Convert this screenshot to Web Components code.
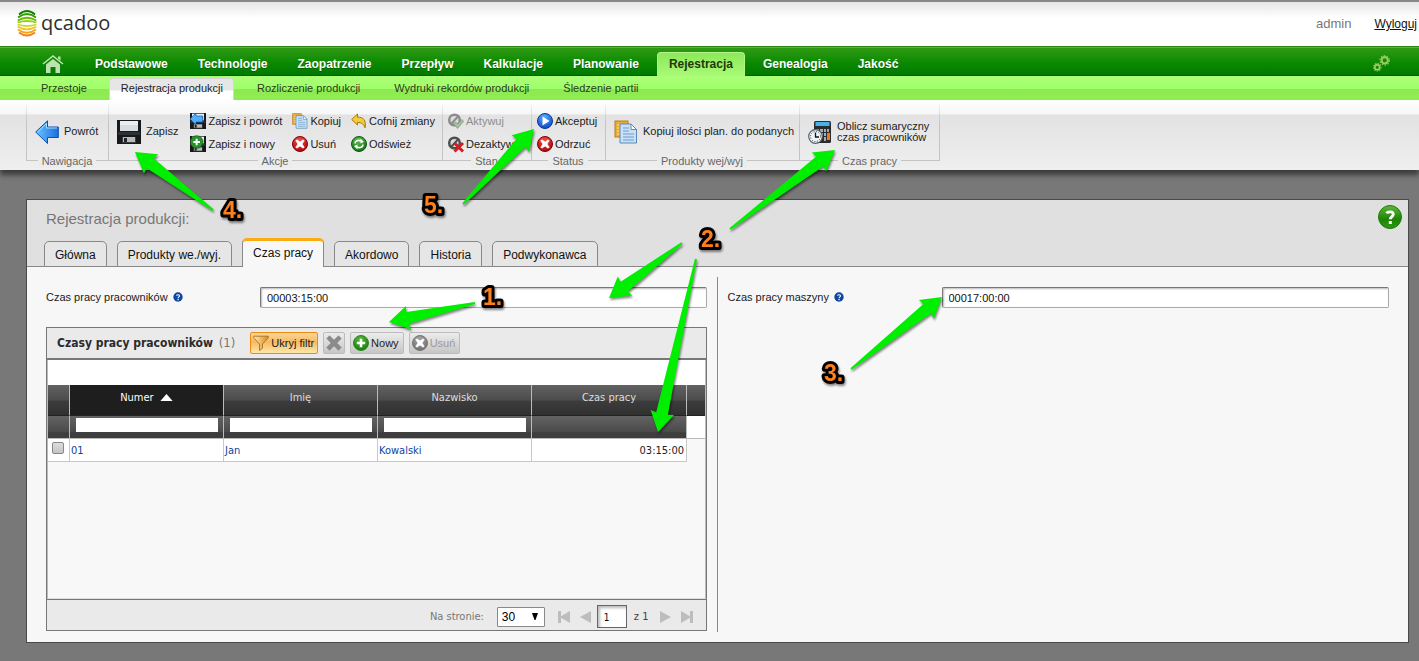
<!DOCTYPE html>
<html lang="pl">
<head>
<meta charset="utf-8">
<title>qcadoo - Rejestracja produkcji</title>
<style>
  html { min-height: 100%; background: #787878; }
  body { margin: 0; font: 11px/14px "Liberation Sans", Arial, sans-serif; color: #222; }
</style>
</head>
<body>
<qc-app></qc-app>

<script>
/* ---------- icons ---------- */
const FLOPPY = `
  <rect x="0" y="0" width="24" height="24" fill="#16181c"/>
  <rect x="3" y="1" width="18" height="10" fill="#e9edef"/>
  <path d="M3 6h18M3 8h18M3 10h18" stroke="#c3ccd2" stroke-width="1"/>
  <rect x="1" y="12" width="22" height="3" fill="#2c2f36"/>
  <rect x="5" y="17" width="14" height="6" fill="#3a3d40"/>
  <rect x="6" y="17" width="12" height="5" fill="#b9b9b9"/>
  <rect x="7" y="18" width="3" height="4" fill="#222"/>`;
const ball = (a, b, rim) => `
  <radialGradient id="g" cx=".45" cy=".25" r=".8"><stop offset="0" stop-color="${a}"/><stop offset="1" stop-color="${b}"/></radialGradient>
  <circle cx="8" cy="8" r="7.5" fill="url(#g)" stroke="${rim}"/>`;
const CROSS = c => `<path d="M4.8 3.8 8 6l3.2-2.2 1 1L10 8l2.2 3.2-1 1L8 10l-3.200 2.200-1-1L6 8 3.800 4.800z" fill="${c}" stroke="${c}" stroke-width=".7"/>`;
const COPY = `
  <rect x="1" y="1" width="13" height="16" fill="#e8ab35" stroke="#b97f1b"/>
  <path d="M3 5h3M3 8h3M3 11h3M3 14h3" stroke="#fbe3a5"/>
  <path d="M6 4h11l5.500 5.500V23H6z" fill="#c9e1f7" stroke="#5d88b5"/>
  <path d="M17 4v5.500h5.500z" fill="#fff" stroke="#5d88b5"/>
  <path d="M9 8h6M9 11h6M9 14h11M9 17h11M9 20h11" stroke="#6f9dca"/>`;
const ICONS = {
  home: ["0 0 22 18", `<path d="M1 9 11 1l10 8" fill="none" stroke="#bfe3b0" stroke-width="1.600"/><path d="M16 1.500h2.500v4L16 3.500zM4 9.500 11 4l7 5.500V18h-4.500v-6h-5v6H4z" fill="#bfe3b0"/>`],
  gears: ["0 0 16 16", `<g fill="none" stroke="#9aca62"><circle cx="11" cy="5" r="3" stroke-width="2"/><circle cx="11" cy="5" r="4.500" stroke-width="1" stroke-dasharray="1.400 1.400"/><circle cx="4" cy="11.500" r="2.300" stroke-width="1.700"/><circle cx="4" cy="11.500" r="3.600" stroke-width="1" stroke-dasharray="1.200 1.200"/></g>`],
  back: ["0 0 24 24", `<linearGradient id="g" x2="1"><stop offset="0" stop-color="#6cc4ff"/><stop offset="1" stop-color="#1a6fe0"/></linearGradient><path d="M.7 12 12.500 .800V7h10.800v10.500H12.500v6z" fill="url(#g)" stroke="#0b4fb5"/><path d="M2.500 12 11.500 3.500V8h10.500" fill="none" stroke="#a9deff"/>`],
  save: ["0 0 24 24", FLOPPY],
  saveBack: ["0 0 24 24", FLOPPY + `<path d="M0 9 9 0v4.500h10v9H9V18z" fill="#4db0f8" stroke="#0b4fb5"/>`],
  saveNew: ["0 0 24 24", FLOPPY + `<circle cx="10" cy="9" r="9.500" fill="#27922a" stroke="#0f5c13"/><path d="M10 4v10M5 9h10" stroke="#fff" stroke-width="3"/>`],
  copy: ["0 0 24 24", COPY],
  remove: ["0 0 16 16", ball("#f0504a", "#a80008", "#860006") + CROSS("#fff")],
  undo: ["0 0 16 16", `<path d="M.7 6.500 6.500 1v3.200C12 4 15.500 7 14 14.800 12.800 11 10.500 9.300 6.500 9.300V12z" fill="#f3cd3c" stroke="#a87608"/>`],
  refresh: ["0 0 16 16", ball("#5fc04e", "#0e6c12", "#0b5a0e") + `<g fill="none" stroke="#fff" stroke-width="1.600"><path d="M4 7.500C4 5 7 3.500 10 5M12 8.500c0 2.500-3 4-6 2.500"/></g><path d="M9.500 2.500v5L13 6zM6.500 13.500v-5L3 10z" fill="#fff"/>`],
  activate: ["0 0 16 16", `<circle cx="6.500" cy="7" r="5.300" fill="#ddd" stroke="#8c8c8c" stroke-width="2.500"/><path d="M3 11 10 3.500" stroke="#8c8c8c" stroke-width="2"/><path d="m5.500 10.500 2-1.500 2 2 4.500-4.500 1.500 2-6 7z" fill="#a6bfa0" stroke="#7e9a79" stroke-width=".7"/>`],
  deactivate: ["0 0 16 16", `<circle cx="6.500" cy="7" r="5.300" fill="#ddd" stroke="#4e4e4e" stroke-width="2.500"/><path d="M3 11 10 3.500" stroke="#4e4e4e" stroke-width="2"/><path d="m6.500 7 8.500 8.500M15 7 6.500 15.500" stroke="#cf1f22" stroke-width="3"/>`],
  accept: ["0 0 16 16", ball("#58b0ff", "#0a3fc4", "#0a369c") + `<path d="M5.500 3.500 12.500 8l-7 4.500z" fill="#fff"/>`],
  calc: ["0 0 24 24", `<rect x="6" y="1" width="17" height="22" rx="1.500" fill="#2a2c30"/><rect x="7.500" y="2" width="14" height="4" fill="#46b3ea"/><g fill="#a9adb0"><path d="M8 9h3v3H8zM12 9h3v3h-3zM16 9h2v3h-2zM12 13h3v3h-3zM16 13h2v3h-2zM16 17h2v4h-2zM19 9h2v3h-2z"/></g><path d="M19 13h3v7h-3z" fill="#ef7a1e"/><circle cx="7.500" cy="16.500" r="6.800" fill="#eef4f8" stroke="#56616b" stroke-width="1.200"/><circle cx="7.500" cy="16.500" r="5" fill="none" stroke="#333" stroke-dasharray="1 1.620"/><path d="M7.500 12.500v4.500H11" fill="none" stroke="#111" stroke-width="1.300"/>`],
  help: ["0 0 24 24", `<linearGradient id="g" x2="0" y2="1"><stop offset="0" stop-color="#5fb83a"/><stop offset=".6" stop-color="#1d8405"/><stop offset="1" stop-color="#2f9a12"/></linearGradient><circle cx="12" cy="12" r="11.500" fill="url(#g)" stroke="#1f7d0c"/><path d="M8.500 8.300C9.500 6.500 15.300 5.800 15.300 9.300c0 2.200-3 2.400-3 5" fill="none" stroke="#fff" stroke-width="2.800"/><rect x="10.800" y="16" width="3" height="3" fill="#fff"/>`],
  hint: ["0 0 10 10", `<circle cx="5" cy="5" r="4.700" fill="#0d479f"/><path d="M3.500 3.600C4 2.300 6.600 2.400 6.500 4 6.400 5 5.100 4.900 5.100 6.200" fill="none" stroke="#fff" stroke-width="1.100"/><rect x="4.500" y="7" width="1.200" height="1.200" fill="#fff"/>`],
  filter: ["0 0 16 16", `<linearGradient id="g" x2="1"><stop offset="0" stop-color="#ffe9b0"/><stop offset="1" stop-color="#d98b22"/></linearGradient><path d="M.7 1.200h14.600v1.500L9.500 9v4.200l-3 2.300V9L.7 2.700z" fill="url(#g)" stroke="#a8701c" stroke-width=".9"/>`],
  clear: ["0 0 16 16", `<path d="M3.500.8 8 5.200 12.500.8l2.700 2.700L10.800 8l4.400 4.500-2.700 2.700L8 10.800l-4.500 4.400L.8 12.500 5.200 8 .8 3.500z" fill="#8b8b8b" stroke="#777" stroke-width=".6"/>`],
  add: ["0 0 16 16", ball("#56b53c", "#137c05", "#2a8a16") + `<path d="M8 3.800v8.400M3.800 8h8.400" stroke="#fff" stroke-width="2.600"/>`],
  removeOff: ["0 0 16 16", ball("#a5a5a5", "#6c6c6c", "#777") + CROSS("#fff")],
  first: ["0 0 13 12", `<path d="M0 0h3v5.200L12 0v12L3 6.800V12H0z" fill="#bdbdbd"/>`],
  prev: ["0 0 13 12", `<path d="M12 0v12L1 6z" fill="#bdbdbd"/>`],
  next: ["0 0 13 12", `<path d="M1 0v12l11-6z" fill="#bdbdbd"/>`],
  last: ["0 0 13 12", `<path d="M13 0h-3v5.200L1 0v12l9-5.200V12h3z" fill="#bdbdbd"/>`],
  sort: ["0 0 14 8", `<path d="M7 0l7 8H0z" fill="#fff"/>`],
  caret: ["0 0 6 8", `<path d="M0 0h6L3.500 7h-1z" fill="#000"/>`],
  logo: ["0 0 20 28", `<g fill="none" stroke-width="1.800"><path d="M2 5.500Q10-1.500 18 5.500" stroke="#0c8000"/><path d="M1 8.500Q10 1.500 19 8.500" stroke="#359a00"/><path d="M.7 11.500Q10 6 19.300 11.500" stroke="#6cba05"/><path d="M.5 13.500Q10 10.500 19.500 13.500" stroke="#9ace18"/><path d="M.5 15.500Q10 18.500 19.500 15.500" stroke="#cfd92a"/><path d="M.7 17.800Q10 23 19.300 17.800" stroke="#eec422"/><path d="M1 20.500Q10 27 19 20.500" stroke="#f8a51c"/><path d="M2 23.500Q10 29.500 18 23.500" stroke="#f57f14"/></g>`]
};

/* registers an element; setup fills the cloned markup before it is attached */
const define = (name, html, setup) => {
  const template = document.createElement("template");
  template.innerHTML = html;
  customElements.define(name, class extends HTMLElement {
    connectedCallback() {
      if (this.shadowRoot) return;
      const content = template.content.cloneNode(true);
      if (setup) setup(this, content);
      this.attachShadow({ mode: "open" }).append(content);
    }
  });
};

/* <qc-icon name w h> */
define("qc-icon", `<style>:host{display:block;flex:none} svg{display:block;overflow:visible}</style><svg aria-hidden="true"></svg>`, (el, root) => {
  const [box, body] = ICONS[el.getAttribute("name")];
  const svg = root.querySelector("svg");
  svg.setAttribute("viewBox", box);
  svg.setAttribute("width", el.getAttribute("w") || 16);
  svg.setAttribute("height", el.getAttribute("h") || el.getAttribute("w") || 16);
  svg.innerHTML = body;
});

/* top strip with logo and session links */
define("qc-header", `
<style>
  :host { display: flex; box-sizing: border-box; height: 46px; border-top: 2px solid #888; padding: 0 2px 0 17px; align-items: center; background: linear-gradient(#e6e6e6, #fff 16px); }
  .brand { display: flex; align-items: center; gap: 4px; height: 44px; padding-bottom: 3px; box-sizing: border-box; font: 20px/24px "Open Sans", "Noto Sans", sans-serif; color: #2e2e2e; }
  nav { margin-left: auto; display: flex; gap: 23px; font-size: 12px; color: #777; }
  .user { font-size: 13px; }
  a { color: #111; text-decoration: underline; }
</style>
<div class="brand"><qc-icon name="logo" w="20" h="28"></qc-icon><span>qcadoo</span></div>
<nav><span class="user">admin</span><a href="#logout">Wyloguj</a></nav>`);

/* main menu */
define("qc-menu", `
<style>
  :host { display: flex; box-sizing: border-box; height: 30px; padding: 0 29px 0 42px; border-top: 1px solid #2c8a12; border-bottom: 1px solid #085a04; background: linear-gradient(#5cb03c 1px, #2f9a14 1px, #0a8800 60%, #007a00); font: bold 12px/16px "Liberation Sans", Arial, sans-serif; align-items: center; }
  nav { display: flex; align-self: stretch; align-items: flex-end; gap: 6px; margin-left: 19px; }
  ::slotted(a) { padding: 4px 12px 3px; color: #fff; text-decoration: none; text-shadow: 0 1px 0 #05600a; }
  ::slotted(a[aria-current]) { padding: 3px 11px 4px; margin-bottom: -1px; color: #1d3a08; text-shadow: none; border: 1px solid #b6f58c; border-bottom: 0; border-radius: 4px 4px 0 0; background: linear-gradient(#8ce85a, #a9fa76); }
  .gear { margin-left: auto; padding-top: 4px; }
  .homelink { margin-top: 6px; }
</style>
<a class="homelink" href="#home" aria-label="Start"><qc-icon name="home" w="22" h="18"></qc-icon></a>
<nav><slot></slot></nav>
<a class="gear" href="#admin" aria-label="Administracja"><qc-icon name="gears" w="17"></qc-icon></a>`);

define("qc-submenu", `
<style>
  :host { display: flex; box-sizing: border-box; height: 24px; padding: 0 29px; gap: 11px; align-items: flex-end; background: linear-gradient(#acff78, #9fff68 13px, #8ee852 13px, #90ee52); line-height: 16px; }
  ::slotted(a) { padding: 0 11px 4px 12px; color: #2b3b1b; text-decoration: none; }
  ::slotted(a[aria-current]) { padding: 1px 10px 4px 11px; border-radius: 4px 4px 0 0; border: 1px solid #d6d6d6; border-bottom: 0; color: #222; background: linear-gradient(#e6e6e6 50%, #fff 60%); }
</style><slot></slot>`);

/* ribbon */
define("qc-ribbon", `
<style>
  :host { display: flex; box-sizing: border-box; height: 70px; padding: 2px 26px 0; background: linear-gradient(#fff, #f6f6f6 14px, #e2e2e2 15px, #efefef); box-shadow: 0 5px 5px #3c3c3c; }
</style><slot></slot>`);

define("qc-ribbon-group", `
<style>
  :host { display: flex; flex-direction: column; box-sizing: border-box; flex: none; height: 66px; }
  .items { display: flex; align-items: center; box-sizing: border-box; height: 59px; padding: 1px 0 0 5px; border: 1px solid; border-image: linear-gradient(#c4c4c400, #c4c4c4 40%) 1; border-top: 0; border-right: 0; }
  :host([wide]) .items { padding-left: 8px; }
  :host([last]) .items { border-right: 1px solid; }
  .name { align-self: center; margin-top: -7px; padding: 0 4px; background: #ececec; color: #666; }
</style>
<div class="items"><slot></slot></div><div class="name"></div>`, (el, root) => {
  root.querySelector(".name").textContent = el.getAttribute("name");
  el.style.width = el.getAttribute("width") + "px";
});

define("qc-ribbon-stack", `
<style>:host { display: grid; grid-auto-flow: column; grid-template-rows: 16px 16px; row-gap: 7px; column-gap: 10px; padding-top: 2px; justify-items: start; flex: none; }</style><slot></slot>`);

/* ribbon and grid buttons hand their icon name to the inner qc-icon */
const setupButton = (el, root) => {
  const icon = root.querySelector("qc-icon");
  icon.setAttribute("name", el.getAttribute("icon"));
  icon.setAttribute("w", el.hasAttribute("big") ? 24 : 16);
  const button = root.querySelector("button");
  button.disabled = el.hasAttribute("off");
  if (el.hasAttribute("label")) button.setAttribute("aria-label", el.getAttribute("label"));
};

define("qc-action", `
<style>
  :host { display: block; flex: none; }
  button { display: flex; align-items: center; gap: 2px; padding: 0; border: 0; background: none; font: inherit; line-height: 14px; color: #1c1c1c; white-space: nowrap; text-align: left; }
  :host([big]) button { gap: 5px; line-height: 11px; }
  button:disabled { color: #8d8d8d; }
</style>
<button type="button"><qc-icon></qc-icon><span><slot></slot></span></button>`, setupButton);

/* labelled text field */
define("qc-field", `
<style>
  :host { display: flex; align-items: center; }
  label { display: flex; align-items: center; gap: 5px; flex: 0 0 214px; height: 16px; padding-bottom: 2px; color: #1a1a1a; }
  input { flex: 1; min-width: 0; box-sizing: border-box; height: 21px; padding: 1px 6px 0; border: 1px solid #aaa; border-top: 1px solid #777; border-left-color: #777; border-radius: 2px; box-shadow: inset 1px 1px 2px #bbb; background: #fff; font: inherit; color: #111; }
</style>
<label for="f"><span></span><qc-icon name="hint" w="10"></qc-icon></label><input id="f" type="text">`, (el, root) => {
  root.querySelector("span").textContent = el.getAttribute("label");
  root.querySelector("input").setAttribute("value", el.getAttribute("value"));
});

define("qc-tabs", `
<style>
  :host { display: flex; align-items: flex-end; gap: 10px; margin-bottom: -1px; }
  ::slotted(button) { box-sizing: border-box; height: 26px; padding: 1px 10px 0; border: 1px solid #888; border-radius: 5px 5px 0 0; background: #e6e6e6; color: #111; font: 12px/16px "Liberation Sans", Arial, sans-serif; }
  ::slotted(button[aria-selected="true"]) { height: 29px; padding: 0 10px 3px; border-top: 3px solid #fdab13; border-bottom: 0; background: #f7f7f7; }
</style><slot></slot>`);

/* toolbar button in grid header */
define("qc-tool", `
<style>
  :host { display: block; flex: none; }
  button { display: flex; align-items: center; gap: 2px; box-sizing: border-box; height: 22px; padding: 0 4px 0 2px; border: 1px solid #bcbcbc; border-radius: 2px; background: linear-gradient(#ececec, #c6c6c6); font: inherit; color: #222; white-space: nowrap; }
  :host([square]) button { gap: 0; padding: 0 2px; }
  :host([active]) button { padding: 0 3px 0 2px; border: 1px solid #f08a12; background: linear-gradient(#fad79b, #f5ba62 45%, #ffe7a9); }
  button:disabled { color: #9a9a9a; }
</style>
<button type="button"><qc-icon></qc-icon><slot></slot></button>`, setupButton);

define("qc-pager", `
<style>
  :host { display: flex; align-items: center; justify-content: flex-end; box-sizing: border-box; height: 31px; padding: 3px 13px 0 0; border-top: 1px solid #777; background: #eaeaea; color: #777; font-family: "DejaVu Sans Condensed", "DejaVu Sans", sans-serif; }
  .pick { position: relative; margin: 0 13px; }
  select { appearance: none; display: block; box-sizing: border-box; width: 48px; height: 20px; padding: 0 4px; border: 1px solid #888; border-radius: 1px; background: #fff; color: #000; font: 12px/16px "Liberation Sans", Arial, sans-serif; }
  .pick qc-icon { position: absolute; right: 7px; top: 6px; pointer-events: none; }
  button { border: 0; padding: 0; background: none; }
  .b { margin-left: 8px; }
  input { box-sizing: border-box; width: 30px; height: 23px; margin: 0 7px 0 5px; padding: 2px 6px 0; border: 1px solid #666; box-shadow: inset 2px 2px 3px #bbb; font: inherit; font-size: 10px; color: #111; background: #fff; }
  .of { color: #444; margin-right: 10px; }
</style>
<label for="n">Na stronie:</label>
<span class="pick"><select id="n"><option>30</option></select><qc-icon name="caret" w="6" h="8"></qc-icon></span>
<button type="button" aria-label="Pierwsza"><qc-icon name="first" w="13" h="12"></qc-icon></button>
<button class="b" type="button" aria-label="Poprzednia"><qc-icon name="prev" w="13" h="12"></qc-icon></button>
<input type="text" value="1" aria-label="Strona"><span class="of">z 1</span>
<button type="button" aria-label="Następna"><qc-icon name="next" w="13" h="12"></qc-icon></button>
<button class="b" type="button" aria-label="Ostatnia"><qc-icon name="last" w="13" h="12"></qc-icon></button>`);

define("qc-grid", `
<style>
  :host { display: flex; flex-direction: column; box-sizing: border-box; height: 304px; border: 1px solid #777; }
  header { display: flex; align-items: center; gap: 5px; box-sizing: border-box; height: 32px; padding: 0 10px; border-bottom: 2px solid #777; background: #eaeaea; }
  h2 { margin: 0 10px 0 0; font: bold 12px/16px "DejaVu Sans Condensed", "DejaVu Sans", sans-serif; color: #2b2b2b; white-space: nowrap; }
  h2 span { margin-left: 2px; font-size: 13px; font-weight: normal; color: #777; }
  .body { flex: 1; border: 1px solid #bbb; border-bottom-color: #ddd; border-top: 0; background: #f8f8f8; font-family: "DejaVu Sans Condensed", "DejaVu Sans", sans-serif; }
  .spacer { height: 25px; background: #fff; }
  table { width: 100%; table-layout: fixed; border-spacing: 0; }
  th, td { box-sizing: border-box; padding: 0; font-weight: normal; }
  .head th { height: 31px; padding-bottom: 4px; color: #ddd; border-right: 1px solid #bbb; border-bottom: 1px solid #222; background: linear-gradient(#626262, #4b4b4b 50%, #3c3c3c 54%, #303030); }
  .head th.sorted { background: #1e1e1e; color: #fff; }
  .head th:last-child { border-right: 0; }
  .sorted qc-icon { display: inline-block; margin-left: 3px; }
  .filter td { height: 23px; border-right: 1px solid #bbb; border-bottom: 1px solid #bbb; background: linear-gradient(#636363, #4a4a4a 72%, #3d3d3d 76%); }
  .filter td:last-child { background: #fff; border-right: 0; }
  .filter input { display: block; box-sizing: border-box; width: calc(100% - 11px); height: 14px; margin: 0 5px 4px 6px; padding: 0 2px; border: 0; background: #fff; font: inherit; }
  .row td { height: 23px; padding: 1px 2px 0 1px; border-right: 1px solid #c8c8c8; border-bottom: 1px solid #c8c8c8; background: #fff; color: #10449b; }
  .row td:last-child { border: 0; background: none; }
  .row .time { text-align: right; color: #222; }
  .row input { appearance: none; display: block; box-sizing: border-box; width: 12px; height: 12px; margin: 0 0 5px 3px; border: 1px solid #888; border-radius: 2px; background: linear-gradient(#ddd, #c4c4c4); }
</style>
<header>
  <h2>Czasy pracy pracowników <span>(1)</span></h2><slot name="tools"></slot>
</header>
<div class="body">
  <div class="spacer"></div>
  <table>
    <colgroup><col style="width:22px"><col style="width:154px"><col style="width:154px"><col style="width:154px"><col style="width:155px"><col></colgroup>
    <thead>
      <tr class="head"><th></th><th class="sorted" aria-sort="ascending">Numer <qc-icon name="sort" w="13" h="7"></qc-icon></th><th>Imię</th><th>Nazwisko</th><th>Czas pracy</th><th></th></tr>
      <tr class="filter"><td></td><td><input type="text" aria-label="Filtr: Numer"></td><td><input type="text" aria-label="Filtr: Imię"></td><td><input type="text" aria-label="Filtr: Nazwisko"></td><td></td><td></td></tr>
    </thead>
    <tbody>
      <tr class="row"><td><input type="checkbox" aria-label="Zaznacz 01"></td><td>01</td><td>Jan</td><td>Kowalski</td><td class="time">03:15:00</td><td></td></tr>
    </tbody>
  </table>
</div>
<slot name="pager"></slot>`);

/* form window */
define("qc-window", `
<style>
  :host { display: block; margin: 29px 10px 18px 26px; border: 1px solid #484848; background: #f7f7f7; }
  .top { display: flex; justify-content: space-between; align-items: flex-start; box-sizing: border-box; height: 38px; padding: 5px 6px 0 19px; background: #e0e0e0; }
  h1 { margin: 4px 0 0; font: 15px/20px "Liberation Sans", Arial, sans-serif; color: #777; }
  .tabs { padding: 0 17px; background: #e0e0e0; border-bottom: 1px solid #888; }
  .cols { display: grid; grid-template-columns: minmax(0, 1fr) minmax(0, 1fr); padding: 10px 0; }
  .left { box-sizing: border-box; padding: 10px 10px 0 19px; border-right: 1px solid #888; min-height: 355px; }
  .right { padding: 10px 19px 0 10px; }
  button { padding: 0; border: 0; background: none; }
</style>
<div class="top"><h1>Rejestracja produkcji:</h1><button type="button" aria-label="Pomoc"><qc-icon name="help" w="24"></qc-icon></button></div>
<div class="tabs"><slot name="tabs"></slot></div>
<div class="cols"><div class="left"><slot name="left"></slot></div><div class="right"><slot name="right"></slot></div></div>`);

/* numbered arrows that float over the screen */
define("qc-callouts", `
<style>
  :host { position: absolute; left: 0; top: 0; pointer-events: none; }
  svg { display: block; overflow: visible; }
  path { fill: #00ee00; filter: drop-shadow(1px 2px 1px #0007); }
  text { font: bold 23px "Liberation Sans", Arial, sans-serif; fill: #ff7f1a; stroke: #000; stroke-width: 6px; stroke-linejoin: round; paint-order: stroke; filter: drop-shadow(1px 2px 1px #0007); }
</style><svg width="960" height="440"></svg>`, (el, root) => {
  const arrows = [[135,152,213,210],[534,129,463,204],[389,322,475,303],[609,298,682,243],[835,150,730,229],[658,432,696,259],[942,297,851,369]];
  const labels = [["1.",483,305],["2.",701,247],["3.",824,381],["4.",223,218],["5.",424,213]];
  root.querySelector("svg").innerHTML = arrows.map(([x, y, tx, ty]) => {
    const len = Math.hypot(tx - x, ty - y), dx = (tx - x) / len, dy = (ty - y) / len;
    const pt = (a, p) => (x + dx * a - dy * p).toFixed(1) + " " + (y + dy * a + dx * p).toFixed(1);
    return `<path d="M${pt(0, 0)}L${pt(20, 12)}L${pt(19, 6)}L${pt(len, 1)}L${pt(len, -1)}L${pt(19, -6)}L${pt(20, -12)}Z"/>`;
  }).join("") + labels.map(([t, x, y]) => `<text x="${x}" y="${y}">${t}</text>`).join("");
});

define("qc-app", `
<style>
  :host { display: block; }
  .field { margin-bottom: 19px; }
  .wide { margin-left: 12px; }
</style>
<qc-header></qc-header>
<qc-menu>
  <a href="#m1">Podstawowe</a><a href="#m2">Technologie</a><a href="#m3">Zaopatrzenie</a><a href="#m4">Przepływ</a><a href="#m5">Kalkulacje</a><a href="#m6">Planowanie</a><a href="#m7" aria-current="page">Rejestracja</a><a href="#m8">Genealogia</a><a href="#m9">Jakość</a>
</qc-menu>
<qc-submenu>
  <a href="#s1">Przestoje</a><a href="#s2" aria-current="page">Rejestracja produkcji</a><a href="#s3">Rozliczenie produkcji</a><a href="#s4">Wydruki rekordów produkcji</a><a href="#s5">Śledzenie partii</a>
</qc-submenu>
<qc-ribbon>
  <qc-ribbon-group wide name="Nawigacja" width="82"><qc-action big icon="back">Powrót</qc-action></qc-ribbon-group>
  <qc-ribbon-group wide name="Akcje" width="334">
    <qc-action big icon="save">Zapisz</qc-action>
    <qc-ribbon-stack class="wide">
      <qc-action icon="saveBack">Zapisz i powrót</qc-action><qc-action icon="saveNew">Zapisz i nowy</qc-action>
      <qc-action icon="copy">Kopiuj</qc-action><qc-action icon="remove">Usuń</qc-action>
      <qc-action icon="undo">Cofnij zmiany</qc-action><qc-action icon="refresh">Odśwież</qc-action>
    </qc-ribbon-stack>
  </qc-ribbon-group>
  <qc-ribbon-group name="Stan" width="89"><qc-ribbon-stack><qc-action off icon="activate">Aktywuj</qc-action><qc-action icon="deactivate">Dezaktywuj</qc-action></qc-ribbon-stack></qc-ribbon-group>
  <qc-ribbon-group name="Status" width="74"><qc-ribbon-stack><qc-action icon="accept">Akceptuj</qc-action><qc-action icon="remove">Odrzuć</qc-action></qc-ribbon-stack></qc-ribbon-group>
  <qc-ribbon-group wide name="Produkty wej/wyj" width="194"><qc-action big icon="copy">Kopiuj ilości plan. do podanych</qc-action></qc-ribbon-group>
  <qc-ribbon-group wide last name="Czas pracy" width="141"><qc-action big icon="calc">Oblicz sumaryczny<br>czas pracowników</qc-action></qc-ribbon-group>
</qc-ribbon>
<qc-window>
  <qc-tabs slot="tabs" role="tablist">
    <button role="tab">Główna</button><button role="tab">Produkty we./wyj.</button><button role="tab" aria-selected="true">Czas pracy</button><button role="tab">Akordowo</button><button role="tab">Historia</button><button role="tab">Podwykonawca</button>
  </qc-tabs>
  <qc-field class="field" slot="left" label="Czas pracy pracowników" value="00003:15:00"></qc-field>
  <qc-grid slot="left">
    <qc-tool slot="tools" active icon="filter">Ukryj filtr</qc-tool>
    <qc-tool slot="tools" square icon="clear" label="Wyczyść filtr"></qc-tool>
    <qc-tool slot="tools" icon="add">Nowy</qc-tool>
    <qc-tool slot="tools" off icon="removeOff">Usuń</qc-tool>
    <qc-pager slot="pager"></qc-pager>
  </qc-grid>
  <qc-field slot="right" label="Czas pracy maszyny" value="00017:00:00"></qc-field>
</qc-window>
<qc-callouts></qc-callouts>`);
</script>
</body>
</html>
